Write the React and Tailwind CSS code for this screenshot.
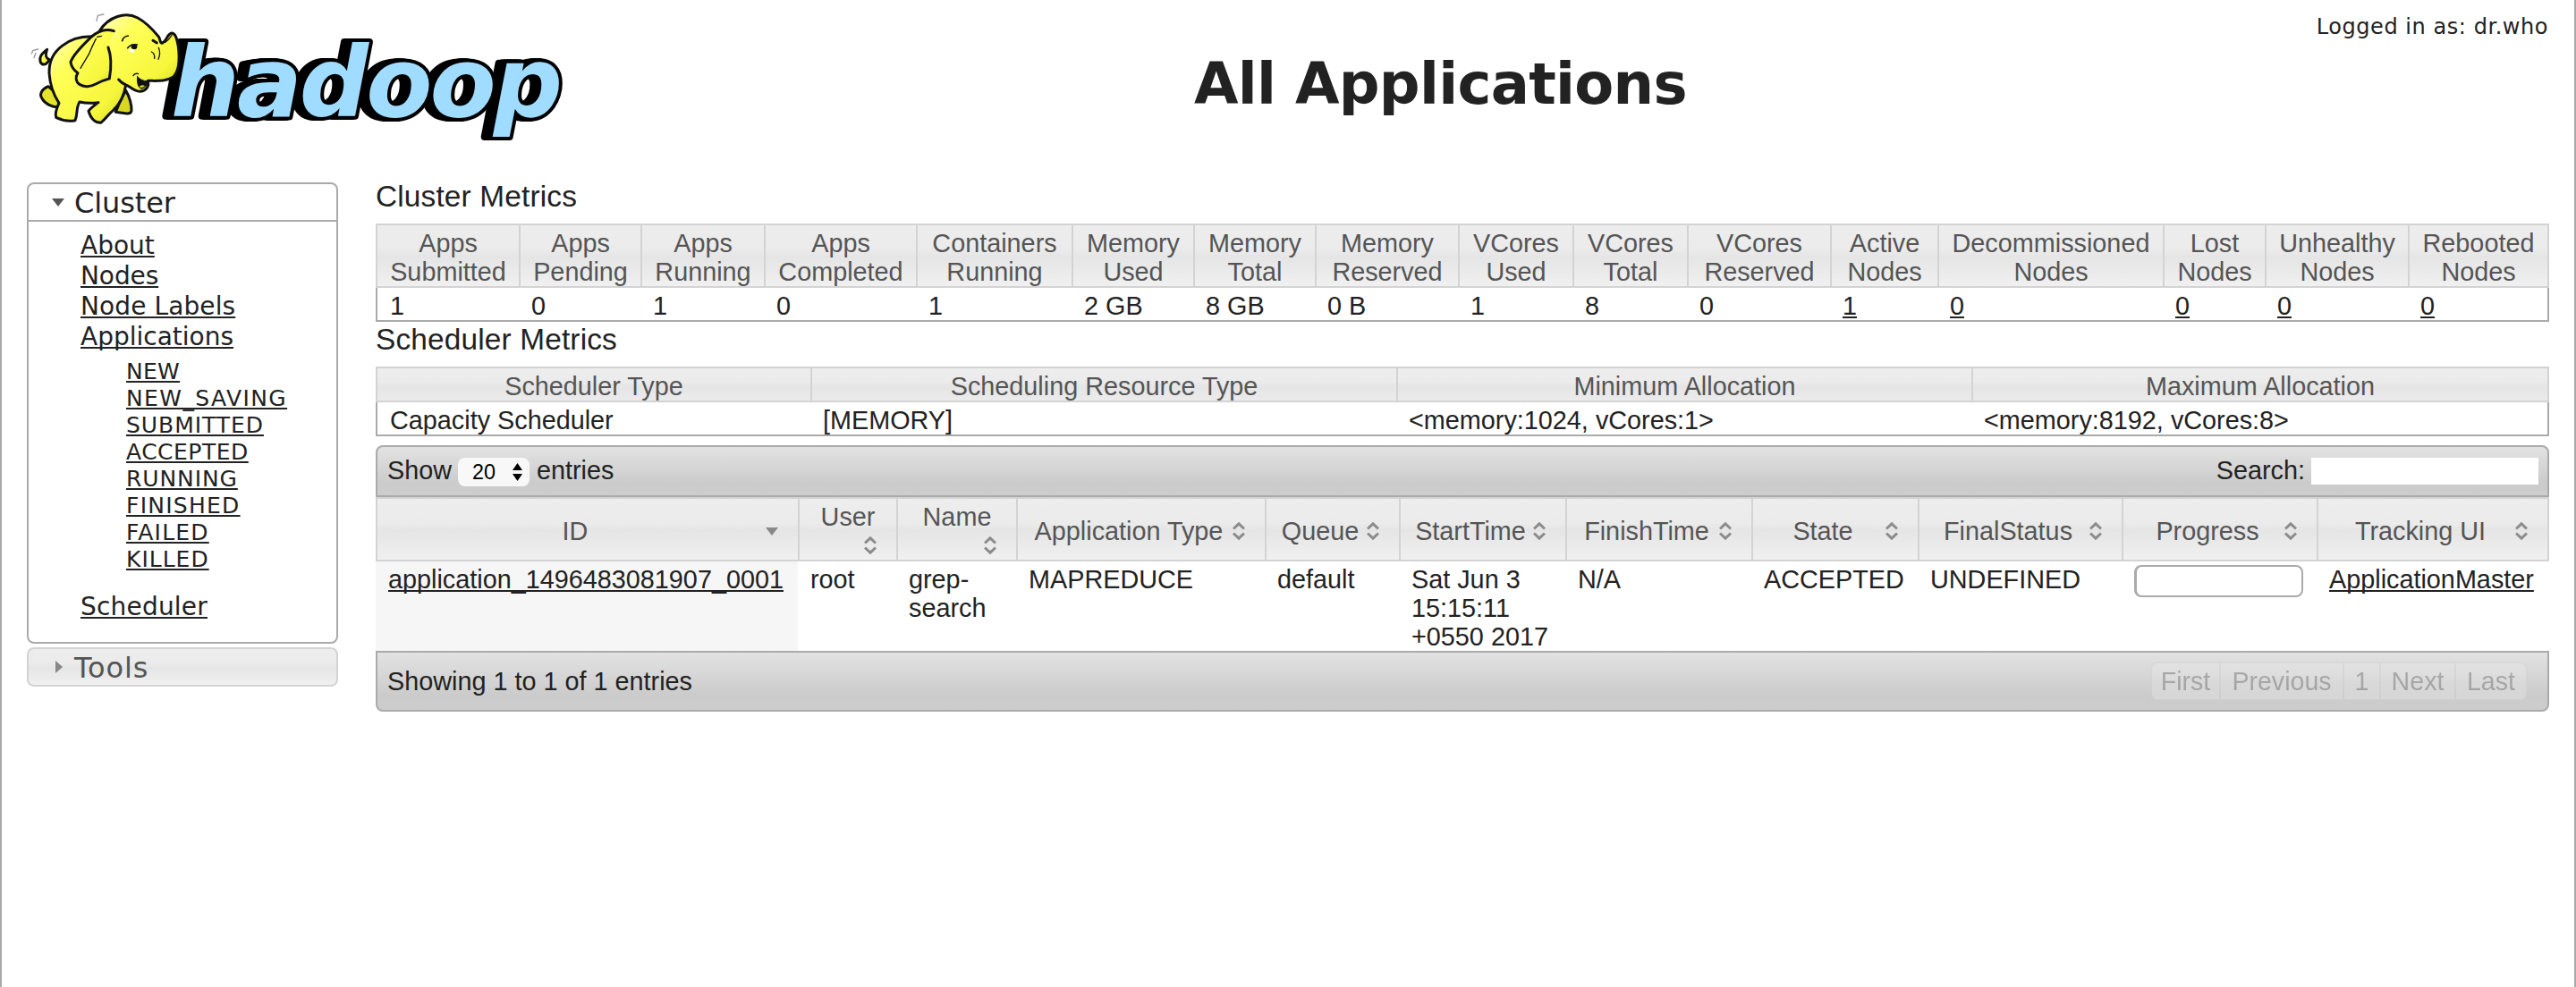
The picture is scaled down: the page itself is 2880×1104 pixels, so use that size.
const headBg =
  'bg-[linear-gradient(to_bottom,#ededed_0%,#ebebeb_40%,#e5e5e5_52%,#f0f0f0_100%)]';
const headBgShort =
  'bg-[linear-gradient(to_bottom,#ededed_0%,#ebebeb_42%,#e5e5e5_56%,#ebebeb_100%)]';
const linkCls =
  'underline decoration-2 underline-offset-2 [text-decoration-skip-ink:none]';

function HadoopLogo() {
  return (
    <svg className="block h-[170px] w-[640px] shrink-0" viewBox="0 0 640 170" aria-label="hadoop">
      <defs>
        <linearGradient id="skin" x1="0" y1="0" x2="1" y2="1">
          <stop offset="0" stopColor="#ffffc8" />
          <stop offset="0.3" stopColor="#ffff58" />
          <stop offset="0.75" stopColor="#f6f63c" />
          <stop offset="1" stopColor="#d6d61e" />
        </linearGradient>
      </defs>
      <text
        x="191"
        y="130"
        textLength="438"
        className="[filter:drop-shadow(-3px_0_0_#000)_drop-shadow(-3px_0_0_#000)_drop-shadow(-3px_0_0_#000)] [paint-order:stroke]"
        fontFamily='"DejaVu Sans", sans-serif'
        fontWeight="bold"
        fontStyle="italic"
        fontSize="108"
        strokeLinejoin="round"
        fill="#a0dcff"
        stroke="#000"
        strokeWidth="8"
      >
        hadoop
      </text>
      <g
        transform="translate(30 8) scale(0.3333)"
        fill="url(#skin)"
        stroke="#111"
        strokeWidth="9"
        strokeLinejoin="round"
        strokeLinecap="round"
      >
        <path fill="#e4e42c" d="M72 266C50 275 40 293 52 308C62 325 85 335 104 335L112 300Z" />
        <path fill="#d8d820" d="M332 280C345 300 352 330 351 348Q349 358 335 357L298 352L315 310Z" />
        <path d="M75 176C65 197 50 196 45 182C41 162 54 155 68 142C61 160 62 170 75 176Z" />
        <path d="M215 98C170 98 140 112 118 130C85 155 74 190 75 222C78 265 90 295 108 322C97 345 95 360 98 370Q130 386 162 380C172 355 164 338 177 318Q205 325 240 320C222 333 212 340 207 349C215 375 228 388 248 388C268 372 272 360 290 346C312 325 326 300 332 262L310 220L260 90Z" />
        <path stroke="none" d="M250 75C275 32 330 14 372 36L406 247L332 261L300 243L240 150Z" />
        <path d="M245 78C275 32 330 14 372 36C402 52 420 72 443 100C448 110 446 120 454 121C471 112 470 91 485 87C499 87 503 105 508 132C513 172 512 213 491 234C466 250 440 247 406 247C411 264 402 280 381 283C360 283 348 266 332 261Q318 255 308 243" />
        <path d="M292 80C262 70 236 82 216 100C190 125 152 165 147 185C150 201 160 213 171 221C161 236 165 250 176 259C192 270 215 267 231 258C250 247 266 243 277 240C283 205 284 165 273 135" />
        <g fill="none" strokeWidth="5">
          <path d="M320 113Q324 98 340 96" />
          <path d="M338 137Q350 122 370 126" />
          <path d="M423 112L436 120" strokeWidth="9" />
          <path d="M418 150Q430 155 428 172M442 136Q450 155 441 175" strokeWidth="4" />
          <path d="M357 230Q362 220 374 224" strokeWidth="4" />
          <path d="M464 118Q476 110 486 95" strokeWidth="4" />
          <path d="M236 100L250 97M232 106Q222 125 208 158Q196 178 180 205" strokeWidth="4" />
          <path d="M234 46L238 28L258 24M16 156L20 146L38 141M24 170L30 154" stroke="#999" strokeWidth="4" />
        </g>
        <ellipse cx="360" cy="133" rx="10" ry="9" fill="#111" stroke="none" />
        <ellipse cx="352" cy="146" rx="9" ry="6" fill="#fff" stroke="none" />
        <path d="M371 233Q384 248 404 248Q404 268 385 274Q368 270 371 233Z" fill="#111" strokeWidth="3" />
        <path d="M376 268Q386 258 396 265Q388 274 376 268Z" fill="#d9d926" stroke="none" />
      </g>
    </svg>
  );
}

const mainLinks = [
  ['About', ''],
  ['Nodes', 'tracking-[-0.1px]'],
  ['Node Labels', 'tracking-[0.1px]'],
  ['Applications', ''],
];
const stateLinks = [
  ['NEW', 'tracking-[0.3px]'],
  ['NEW_SAVING', 'tracking-[1.4px]'],
  ['SUBMITTED', 'tracking-[0.95px]'],
  ['ACCEPTED', 'tracking-[0.5px]'],
  ['RUNNING', 'tracking-[0.9px]'],
  ['FINISHED', 'tracking-[1.25px]'],
  ['FAILED', 'tracking-[1.2px]'],
  ['KILLED', 'tracking-[1px]'],
];

function Sidebar() {
  return (
    <nav className="mt-1 w-[348px] shrink-0 font-['DejaVu_Sans',sans-serif] text-[28px]">
      <div className="h-[516px] rounded-lg border-2 border-[#aaa] bg-white">
        <div className="flex h-[42px] items-center border-b-2 border-[#aaa] pl-[26px]">
          <svg className="h-[9px] w-[14px]" viewBox="0 0 14 9">
            <path d="M0 0H14L7 9Z" fill="#555" />
          </svg>
          <span className="mt-px ml-[11px] text-[32px] leading-[38px] tracking-[-0.1px]">Cluster</span>
        </div>
        <ul className="pt-[10px] pl-[58px] leading-[34px]">
          {mainLinks.map(([t, c]) => (
            <li key={t} className={c}>
              <a className={linkCls}>{t}</a>
            </li>
          ))}
          <li>
            <ul className="mt-[7px] mb-[21px] pl-[51px] text-[25px] leading-[30px]">
              {stateLinks.map(([t, c]) => (
                <li key={t} className={c}>
                  <a className={linkCls}>{t}</a>
                </li>
              ))}
            </ul>
          </li>
          <li className="tracking-[0.2px]">
            <a className={linkCls}>Scheduler</a>
          </li>
        </ul>
      </div>
      <div className={`mt-1 flex h-[44px] items-center rounded-lg border-2 border-[#d3d3d3] pl-[30px] text-[#555] ${headBg}`}>
        <svg className="h-[14px] w-[8px]" viewBox="0 0 8 14">
          <path d="M0 0L8 7L0 14Z" fill="#888" />
        </svg>
        <span className="mt-px ml-[13px] text-[32px] leading-[38px] tracking-[0.9px]">Tools</span>
      </div>
    </nav>
  );
}

const clusterCols = [
  [160, 'Apps', 'Submitted', '1'],
  [136, 'Apps', 'Pending', '0'],
  [138, 'Apps', 'Running', '1'],
  [170, 'Apps', 'Completed', '0'],
  [174, 'Containers', 'Running', '1'],
  [136, 'Memory', 'Used', '2 GB'],
  [136, 'Memory', 'Total', '8 GB'],
  [160, 'Memory', 'Reserved', '0 B'],
  [128, 'VCores', 'Used', '1'],
  [128, 'VCores', 'Total', '8'],
  [160, 'VCores', 'Reserved', '0'],
  [120, 'Active', 'Nodes', '1', true],
  [252, 'Decommissioned', 'Nodes', '0', true],
  [114, 'Lost', 'Nodes', '0', true],
  [160, 'Unhealthy', 'Nodes', '0', true],
  [158, 'Rebooted', 'Nodes', '0', true],
];
const schedulerCols = [
  [486, 'Scheduler Type', 'Capacity Scheduler'],
  [655, 'Scheduling Resource Type', '[MEMORY]'],
  [643, 'Minimum Allocation', '<memory:1024, vCores:1>'],
  [646, 'Maximum Allocation', '<memory:8192, vCores:8>'],
];
const appCols = [
  [472, 'ID'],
  [110, 'User'],
  [134, 'Name'],
  [278, 'Application Type'],
  [150, 'Queue'],
  [186, 'StartTime'],
  [208, 'FinishTime'],
  [186, 'State'],
  [228, 'FinalStatus'],
  [218, 'Progress'],
  [260, 'Tracking UI'],
];

const tableCls = 'w-[2430px] table-fixed border-separate border-spacing-0';
const thCls =
  'border-y-2 border-l-2 border-[#d3d3d3] last:border-r-2 p-0 font-normal text-[#555] align-middle';
const tdCls =
  'border-b-2 border-[#aaa] first:border-l-2 last:border-r-2 pt-1 pr-0 pb-0 pl-[14px] align-top';

function Cols({ cols }) {
  return (
    <colgroup>
      {cols.map(([w], i) => (
        <col key={i} style={{ width: w }} />
      ))}
    </colgroup>
  );
}

function ClusterTable() {
  return (
    <table className={tableCls}>
      <Cols cols={clusterCols} />
      <thead>
        <tr>
          {clusterCols.map(([, a, b], i) => (
            <th key={i} className={`${thCls} ${headBg}`}>
              <div className="pt-1 whitespace-nowrap">
                {a}
                <br />
                {b}
              </div>
            </th>
          ))}
        </tr>
      </thead>
      <tbody>
        <tr>
          {clusterCols.map(([, , , v, link], i) => (
            <td key={i} className={tdCls}>
              {link ? <a className={linkCls}>{v}</a> : v}
            </td>
          ))}
        </tr>
      </tbody>
    </table>
  );
}

function SchedulerTable() {
  return (
    <table className={tableCls}>
      <Cols cols={schedulerCols} />
      <thead>
        <tr>
          {schedulerCols.map(([, a]) => (
            <th key={a} className={`${thCls} ${headBgShort}`}>
              <div className="pt-1">{a}</div>
            </th>
          ))}
        </tr>
      </thead>
      <tbody>
        <tr>
          {schedulerCols.map(([, , v]) => (
            <td key={v} className={tdCls}>
              {v}
            </td>
          ))}
        </tr>
      </tbody>
    </table>
  );
}

function SortIcon() {
  return (
    <svg className="h-5 w-[14px] shrink-0" viewBox="0 0 14 20" fill="none" stroke="#8c8c8c" strokeWidth="3">
      <path d="M1 7.5L7 1.8L13 7.5M1 12.5L7 18.2L13 12.5" />
    </svg>
  );
}

function SortDown() {
  return (
    <svg className="h-[9px] w-[14px] shrink-0" viewBox="0 0 14 9">
      <path d="M0 0H14L7 9Z" fill="#888" />
    </svg>
  );
}

function AppHead({ name }) {
  if (name === 'User' || name === 'Name') {
    return (
      <div className="flex h-[68px] flex-col pt-1">
        <span>{name}</span>
        <span className="flex h-8 items-center justify-end pr-[22px]">
          <SortIcon />
        </span>
      </div>
    );
  }
  return (
    <div className="flex h-[68px] items-center pt-1 pr-[22px] pl-2 whitespace-nowrap">
      <span className="flex-1 text-center">{name}</span>
      {name === 'ID' ? <SortDown /> : <SortIcon />}
    </div>
  );
}

const bodyCell = 'h-[100px] p-0 pt-1 pl-[14px] align-top';

function AppsTable() {
  return (
    <table className={tableCls}>
      <Cols cols={appCols} />
      <thead>
        <tr>
          {appCols.map(([, n]) => (
            <th key={n} className={`${thCls} ${headBg}`}>
              <AppHead name={n} />
            </th>
          ))}
        </tr>
      </thead>
      <tbody>
        <tr>
          <td className={`${bodyCell} bg-[#f6f6f6]`}>
            <a className={linkCls}>application_1496483081907_0001</a>
          </td>
          <td className={bodyCell}>root</td>
          <td className={bodyCell}>
            grep-
            <br />
            search
          </td>
          <td className={bodyCell}>MAPREDUCE</td>
          <td className={bodyCell}>default</td>
          <td className={bodyCell}>
            Sat Jun 3<br />
            15:15:11
            <br />
            +0550 2017
          </td>
          <td className={bodyCell}>N/A</td>
          <td className={bodyCell}>ACCEPTED</td>
          <td className={bodyCell}>UNDEFINED</td>
          <td className={bodyCell}>
            <div className="h-9 w-[189px] rounded-lg border-2 border-l-[3px] border-[#aaa]" />
          </td>
          <td className={bodyCell}>
            <a className={linkCls}>ApplicationMaster</a>
          </td>
        </tr>
      </tbody>
    </table>
  );
}

const barBg = 'bg-[linear-gradient(to_bottom,#e2e2e2_0%,#cbcbcb_75%,#cdcdcd_100%)]';

const pages = [
  ['First', 'w-[79px] rounded-l-lg border-l-2'],
  ['Previous', 'w-[138px]'],
  ['1', 'w-[41px]'],
  ['Next', 'w-[84px]'],
  ['Last', 'w-[80px] rounded-r-lg'],
];

export default function App() {
  return (
    <div className="flex h-[1104px] flex-col overflow-hidden border-x-2 border-[#aaa] bg-white font-['Liberation_Sans',sans-serif] text-[28.8px] leading-8 text-[#222]">
      <header className="-ml-0.5 flex h-[200px] items-start">
        <HadoopLogo />
        <h1 className="mt-[54px] ml-[695px] font-['DejaVu_Sans',sans-serif] text-[64px] leading-[80px] font-bold tracking-[-0.7px] whitespace-nowrap">
          All Applications
        </h1>
        <div className="mt-[14px] mr-[29px] ml-auto font-['DejaVu_Sans',sans-serif] text-[24px] tracking-[0.55px]">
          Logged in as: dr.who
        </div>
      </header>
      <div className="flex items-start gap-[42px] pl-7">
        <Sidebar />
        <main className="w-[2430px]">
          <h3 className="mb-[10px] text-[33.4px] leading-10 tracking-[0.16px]">Cluster Metrics</h3>
          <ClusterTable />
          <h3 className="mb-[10px] text-[33.4px] leading-10 tracking-[0.16px]">Scheduler Metrics</h3>
          <SchedulerTable />
          <section className="mt-[10px]">
            <div className={`flex h-[58px] items-start justify-between rounded-t-lg border-2 border-[#aaa] pt-3 pr-[10px] pl-[11px] ${barBg}`}>
              <div className="flex">
                <span className="-mt-0.5 w-[79px]">Show</span>
                <span className="mr-2 flex h-8 w-20 items-center justify-between rounded-lg bg-[#f8f8f8] pr-2 pl-4 text-[23.4px] text-black">
                  <span>20</span>
                  <svg className="h-5 w-[11px]" viewBox="0 0 11 20">
                    <path d="M5.5 0L11 8H0ZM5.5 20L11 12H0Z" />
                  </svg>
                </span>
                <span className="-mt-0.5">entries</span>
              </div>
              <div className="flex">
                <span className="-mt-0.5 mr-[7px]">Search:</span>
                <span className="h-[30px] w-[254px] bg-white" />
              </div>
            </div>
            <AppsTable />
            <div className={`flex h-[68px] items-center justify-between rounded-b-lg border-2 border-[#aaa] pr-[22px] pl-[11px] ${barBg}`}>
              <span>Showing 1 to 1 of 1 entries</span>
              <div className="flex text-[28.6px] text-[#555] opacity-35">
                {pages.map(([t, c]) => (
                  <span
                    key={t}
                    className={`flex h-11 items-center justify-center border-y-2 border-r-2 border-[#d3d3d3] ${headBg} ${c}`}
                  >
                    {t}
                  </span>
                ))}
              </div>
            </div>
          </section>
        </main>
      </div>
    </div>
  );
}
